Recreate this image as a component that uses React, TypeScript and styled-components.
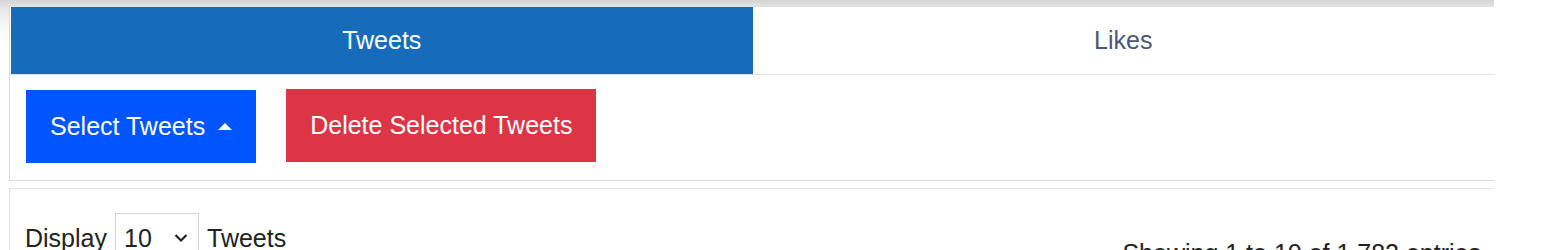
import React from 'react'
import styled, { createGlobalStyle } from 'styled-components'

const GlobalStyle = createGlobalStyle`
    html, body {
        margin: 0;
        padding: 0;
        background: #fff;
        font-family: "Liberation Sans", Arial, sans-serif;
    }
`

const Page = styled.div`
    width: 1494px;
    height: 250px;
    overflow: hidden;
    padding: 7px 0 0 9px;
    box-sizing: border-box;
    background: linear-gradient(to bottom, #d3d3d3 0px, #e4e4e4 7px, #f6f6f6 24px, #fff 44px);
`

const Card = styled.div`
    width: 1485px;
    background: #fff;
`

const TabList = styled.div`
    display: grid;
    grid-template-columns: 1fr 1fr;
    border-left: 1px solid #d6dbe1;
    padding-left: 1px;
    border-bottom: 1px solid #e3e3e3;
`

const Tab = styled.div<{ active?: boolean }>`
    height: 67px;
    display: flex;
    align-items: center;
    justify-content: center;
    font-size: 25px;
    background: ${p => (p.active ? '#166bbb' : '#fff')};
    color: ${p => (p.active ? '#fff' : '#4a5877')};
`

const Toolbar = styled.div`
    display: flex;
    align-items: flex-start;
    gap: 30px;
    padding: 14px 16px 17px;
    border-left: 1px solid #d6dbe1;
    border-bottom: 1px solid #d6dbe1;
`

const Button = styled.button<{ color: string; offset?: number }>`
    display: inline-flex;
    align-items: center;
    margin-top: ${p => p.offset || 0}px;
    padding: 18px 24px;
    line-height: 37px;
    font-size: 25px;
    font-family: inherit;
    color: #fff;
    background: ${p => p.color};
    border: none;
    border-radius: 0;
`

const Caret = styled.span`
    display: inline-block;
    margin-left: 13px;
    width: 0;
    height: 0;
    border-left: 7px solid transparent;
    border-right: 7px solid transparent;
    border-bottom: 7px solid #fff;
`

const TablePanel = styled.div`
    margin-top: 7px;
    border-top: 1px solid #e1e5ea;
    border-left: 1px solid #e1e5ea;
    display: flex;
    align-items: flex-start;
    justify-content: space-between;
    padding: 24px 13px 0 15px;
    color: #222;
    font-size: 25px;
`

const Length = styled.label`
    display: flex;
    align-items: center;
    gap: 8px;
`

const Select = styled.div`
    width: 84px;
    height: 50px;
    box-sizing: border-box;
    border: 1px solid #d3d7dc;
    display: flex;
    align-items: center;
    justify-content: space-between;
    padding: 0 10px 0 8px;
    svg {
        width: 14px;
        height: 10px;
    }
`

const Info = styled.div`
    padding-top: 22px;
    line-height: 36px;
`

const App = () => {
    return (
        <>
            <GlobalStyle />
            <Page>
                <Card>
                    <TabList>
                        <Tab active>Tweets</Tab>
                        <Tab>Likes</Tab>
                    </TabList>
                    <Toolbar>
                        <Button color="#0055ff" offset={1}>
                            Select Tweets
                            <Caret />
                        </Button>
                        <Button color="#dc3545">Delete Selected Tweets</Button>
                    </Toolbar>
                    <TablePanel>
                        <Length>
                            Display
                            <Select>
                                <span>10</span>
                                <svg viewBox="0 0 14 10">
                                    <polyline points="1.5,2 7,7.5 12.5,2" fill="none" stroke="#222" strokeWidth="2.2" />
                                </svg>
                            </Select>
                            Tweets
                        </Length>
                        <Info>Showing 1 to 10 of 1,782 entries</Info>
                    </TablePanel>
                </Card>
            </Page>
        </>
    )
}

export default App
